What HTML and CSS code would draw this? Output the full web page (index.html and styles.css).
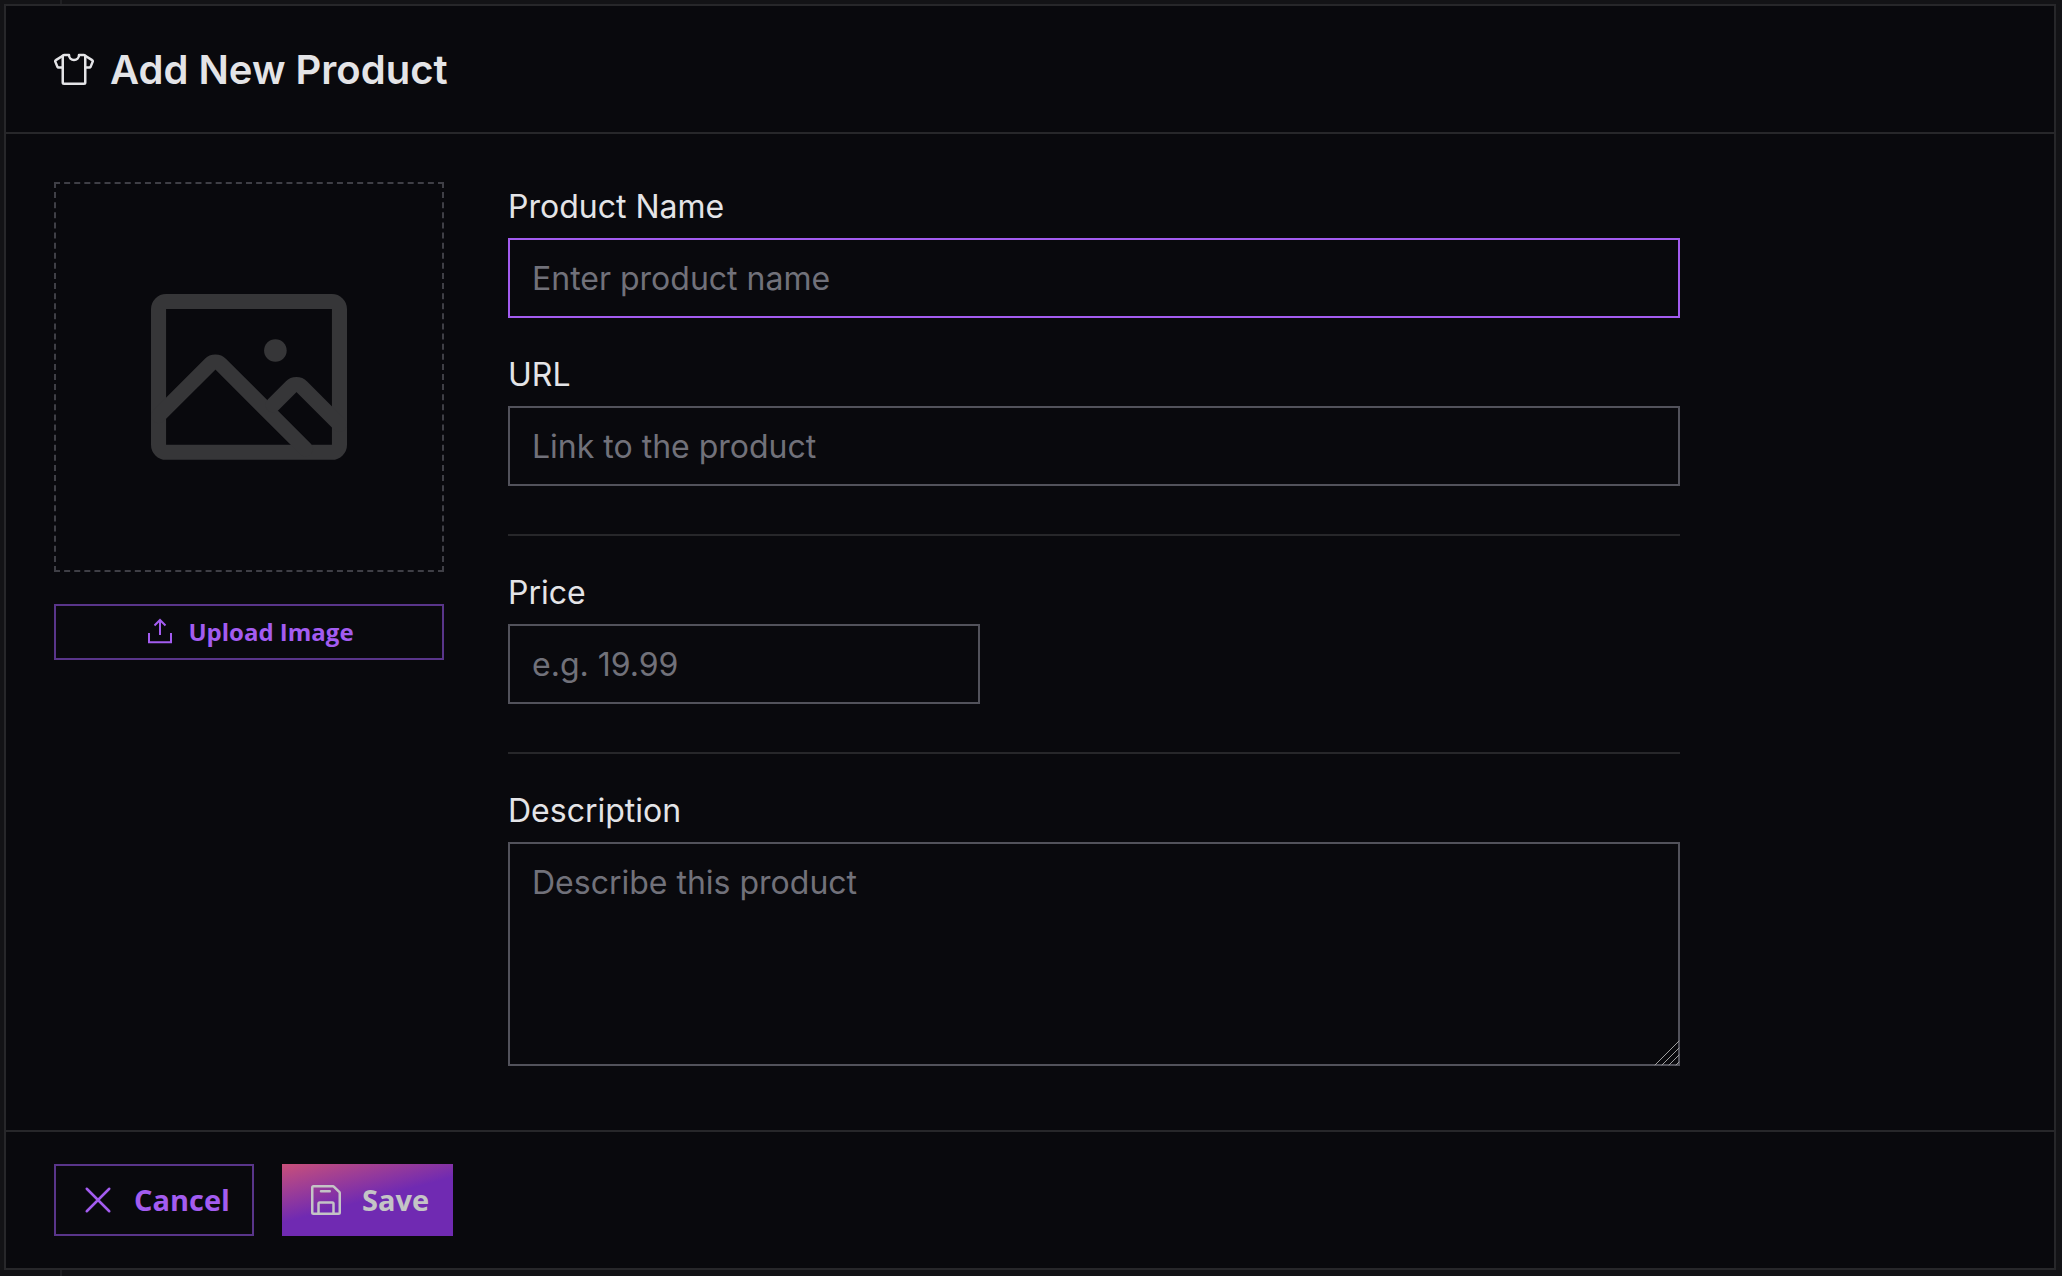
FILE: index.html
```
<!DOCTYPE html>
<html lang="en">
<head>
  <meta charset="UTF-8">
  <meta name="viewport" content="width=device-width, initial-scale=1.0">
  <title>Add New Product</title>
  <link rel="stylesheet" href="styles.css">
</head>
<body>

  <form class="modal" id="product-form">

    <!-- Header -->
    <div class="modal-header">
      <svg class="icon-lg" viewBox="0 0 256 256" aria-hidden="true">
        <path d="M56 112H29a8 8 0 0 1-7-4L9 76a8 8 0 0 1 3-11L64 32h32a32 32 0 0 0 64 0h32l52 33a8 8 0 0 1 3 11l-13 32a8 8 0 0 1-7 4h-27"/>
        <path d="M56 36v172a8 8 0 0 0 8 8h128a8 8 0 0 0 8-8V36"/>
      </svg>
      <h1>Add New Product</h1>
    </div>

    <!-- Body -->
    <div class="modal-body">
      <div class="image-column">
        <div class="image-preview">
          <svg class="image-placeholder" viewBox="24 40 208 176" aria-hidden="true">
            <rect x="32" y="48" width="192" height="160" rx="8"/>
            <path d="M32 169.2L86.6 114.6a8 8 0 0 1 11.4 0L188 204.5"/>
            <path d="M153.5 157.6L172.6 138.5a8 8 0 0 1 11.4 0L224 178.5"/>
            <circle cx="156" cy="100" r="12"/>
          </svg>
        </div>
        <button type="button" class="btn btn-outline btn-small">
          <svg class="icon-sm" viewBox="0 0 32 32" aria-hidden="true">
            <path d="M16 4v15M10.500 9.500L16 4l5.500 5.500M5 17v9.200h22V17"/>
          </svg>
          Upload Image
        </button>
      </div>

      <div class="form-column">
        <div class="field">
          <label for="name">Product Name</label>
          <input type="text" id="name" class="active" placeholder="Enter product name">
        </div>
        <div class="field">
          <label for="url">URL</label>
          <input type="text" id="url" placeholder="Link to the product">
        </div>
        <hr>
        <div class="field field-price">
          <label for="price">Price</label>
          <input type="text" id="price" placeholder="e.g. 19.99">
        </div>
        <hr>
        <div class="field">
          <label for="description">Description</label>
          <div class="textarea-wrap">
            <textarea id="description" placeholder="Describe this product"></textarea>
            <svg class="resize-grip" viewBox="0 0 26 26" aria-hidden="true">
              <path d="M1 25L25 1M8 25L25 8M15 25L25 15M22 25L25 22"/>
            </svg>
          </div>
        </div>
      </div>
    </div>

    <!-- Footer -->
    <div class="modal-footer">
      <button type="button" class="btn btn-outline">
        <svg class="icon-lg" viewBox="0 0 256 256" aria-hidden="true">
          <path d="M56 56L200 200M200 56L56 200"/>
        </svg>
        Cancel
      </button>
      <button type="submit" class="btn btn-primary">
        <svg class="icon-lg" viewBox="0 0 256 256" aria-hidden="true">
          <path d="M216 83V208a8 8 0 0 1-8 8H48a8 8 0 0 1-8-8V48a8 8 0 0 1 8-8H173a8 8 0 0 1 5 2l36 36a8 8 0 0 1 2 5Z"/>
          <path d="M80 216V152a8 8 0 0 1 8-8h80a8 8 0 0 1 8 8v64M96 72h56"/>
        </svg>
        Save
      </button>
    </div>
  </form>

  <script>
    // Nothing to send yet, keep the form on the page
    document.getElementById('product-form').addEventListener('submit', (e) => {
      e.preventDefault();
    });
  </script>
</body>
</html>
```

FILE: styles.css
```
* {
  margin: 0;
  padding: 0;
  box-sizing: border-box;
}

/* Dimmed page behind the modal, with its side rail edge */
body {
  display: flex;
  min-height: 100vh;
  padding: 4px 6px 6px 4px;
  background: linear-gradient(90deg, transparent 60px, #202023 60px 62px, transparent 62px), #131316;
  color: #e4e4e7;
  font-family: Inter, "Liberation Sans", sans-serif;
}

/* Modal */
.modal {
  flex: 1;
  display: flex;
  flex-direction: column;
  background-color: #09090d;
  border: 2px solid #27272a;
}

/* Header */
.modal-header {
  display: flex;
  align-items: center;
  gap: 16px;
  padding: 40px 48px 38px;
  border-bottom: 2px solid #27272a;
}
.modal-header h1 {
  font-size: 40px;
  line-height: 48px;
  font-weight: 600;
}

/* Icons */
svg {
  flex-shrink: 0;
  fill: none;
  stroke: currentColor;
  stroke-linecap: round;
  stroke-linejoin: round;
}
.icon-lg {
  width: 40px;
  height: 40px;
  stroke-width: 16;
}
.icon-sm {
  width: 32px;
  height: 32px;
  stroke-width: 2;
  stroke-linecap: butt;
  stroke-linejoin: miter;
}

/* Body */
.modal-body {
  flex: 1;
  display: flex;
  gap: 64px;
  padding: 48px 48px 64px;
}
.image-column {
  display: flex;
  flex-direction: column;
  gap: 32px;
  width: 390px;
}
.image-preview {
  display: flex;
  align-items: center;
  justify-content: center;
  aspect-ratio: 1;
  border: 2px dashed #3f3f46;
}
.image-placeholder {
  width: 196px;
  stroke: #363638;
  stroke-width: 16;
}
.image-placeholder circle {
  fill: #363638;
  stroke: none;
}

/* Form */
.form-column {
  flex: 1;
  max-width: 1172px;
}
.form-column hr {
  height: 2px;
  margin: 48px 0 32px;
  border: none;
  background-color: #27272a;
}
.field + .field {
  margin-top: 32px;
}
.field-price {
  width: 472px;
}
.field label {
  display: block;
  margin-bottom: 6px;
  font-size: 32px;
  line-height: 50px;
}
input,
textarea {
  display: block;
  width: 100%;
  padding: 14px 22px;
  border: 2px solid #52525b;
  outline: none;
  background: transparent;
  color: #e4e4e7;
  font-family: inherit;
  font-size: 32px;
  line-height: 50px;
}
input {
  height: 80px;
}
input.active,
input:focus,
textarea:focus {
  border-color: #a35cf0;
}
input::placeholder,
textarea::placeholder {
  color: #71717a;
}
.textarea-wrap {
  position: relative;
}
textarea {
  height: 224px;
  resize: none;
}
/* Grip sits over the textarea corner */
.resize-grip {
  position: absolute;
  right: 0;
  bottom: 0;
  width: 26px;
  height: 26px;
  stroke: #a0a0a0;
  stroke-width: 1;
  pointer-events: none;
}

/* Footer */
.modal-footer {
  display: flex;
  gap: 28px;
  padding: 32px 48px;
  border-top: 2px solid #27272a;
}

/* Buttons */
.btn {
  display: flex;
  align-items: center;
  justify-content: center;
  gap: 16px;
  height: 72px;
  padding: 0 24px;
  border: none;
  font-family: "Open Sans", "Noto Sans", sans-serif;
  font-size: 29px;
  line-height: 40px;
  font-weight: 700;
  cursor: pointer;
}
.btn-outline {
  padding: 0 22px;
  border: 2px solid #59358a;
  background: transparent;
  color: #a35cf0;
}
.btn-small {
  gap: 12px;
  height: 56px;
  font-size: 24px;
}
.btn-primary {
  background: linear-gradient(165deg, #c9507a, #702ab2 50%);
  color: #c4c4c6;
}
```
